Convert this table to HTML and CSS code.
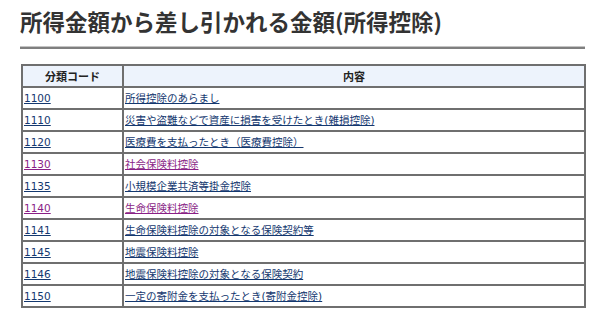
FILE: index.html
```html
<!DOCTYPE html>
<html lang="ja">
<head>
<meta charset="utf-8">
<title>所得控除</title>
<link rel="stylesheet" href="styles.css">
</head>
<body>
<h1 class="title">所得金額から差し引かれる金額(所得控除)</h1>
<div class="rule"></div>
<table class="list">
<thead>
<tr><th class="code">分類コード</th><th>内容</th></tr>
</thead>
<tbody>
<tr><td><a href="#">1100</a></td><td><a href="#">所得控除のあらまし</a></td></tr>
<tr><td><a href="#">1110</a></td><td><a href="#">災害や盗難などで資産に損害を受けたとき(雑損控除)</a></td></tr>
<tr><td><a href="#">1120</a></td><td><a href="#">医療費を支払ったとき（医療費控除）</a></td></tr>
<tr><td><a class="visited" href="#">1130</a></td><td><a class="visited" href="#">社会保険料控除</a></td></tr>
<tr><td><a href="#">1135</a></td><td><a href="#">小規模企業共済等掛金控除</a></td></tr>
<tr><td><a class="visited" href="#">1140</a></td><td><a class="visited" href="#">生命保険料控除</a></td></tr>
<tr><td><a href="#">1141</a></td><td><a href="#">生命保険料控除の対象となる保険契約等</a></td></tr>
<tr><td><a href="#">1145</a></td><td><a href="#">地震保険料控除</a></td></tr>
<tr><td><a href="#">1146</a></td><td><a href="#">地震保険料控除の対象となる保険契約</a></td></tr>
<tr><td><a href="#">1150</a></td><td><a href="#">一定の寄附金を支払ったとき(寄附金控除)</a></td></tr>
</tbody>
</table>
</body>
</html>
```
FILE: styles.css
```css
html, body {
  margin: 0;
  background: #ffffff;
}
body {
  padding: 8px 14px 0 20px;
  font-family: "DejaVu Sans", "Noto Sans CJK JP", sans-serif;
  color: #222;
}
.title {
  margin: 0;
  font-family: "Noto Sans CJK JP", sans-serif;
  font-size: 22.5px;
  font-weight: bold;
  line-height: 26px;
  color: #333;
}
.rule {
  margin-top: 12px;
  height: 2px;
  background: #7f7f7f;
  border-top: 1px solid #c4c4c4;
  margin-right: 1px;
}
.list {
  margin-top: 15px;
  margin-left: 1px;
  width: 565px;
  border-collapse: collapse;
  border: 2px solid #777;
  font-size: 10.5px;
}
.list th, .list td {
  border: 2px solid #6f6f6f;
  height: 20px;
  padding: 0 1px;
  text-align: left;
  vertical-align: middle;
  line-height: 16px;
}
.list th {
  background: #edf3fc;
  text-align: center;
  font-family: "Noto Sans CJK JP", sans-serif;
  font-weight: bold;
  font-size: 11px;
  color: #222;
}
.list th.code {
  width: 97px;
}
.list a {
  color: #14386f;
  text-decoration: underline;
}
.list a.visited {
  color: #8a1f86;
}
```
